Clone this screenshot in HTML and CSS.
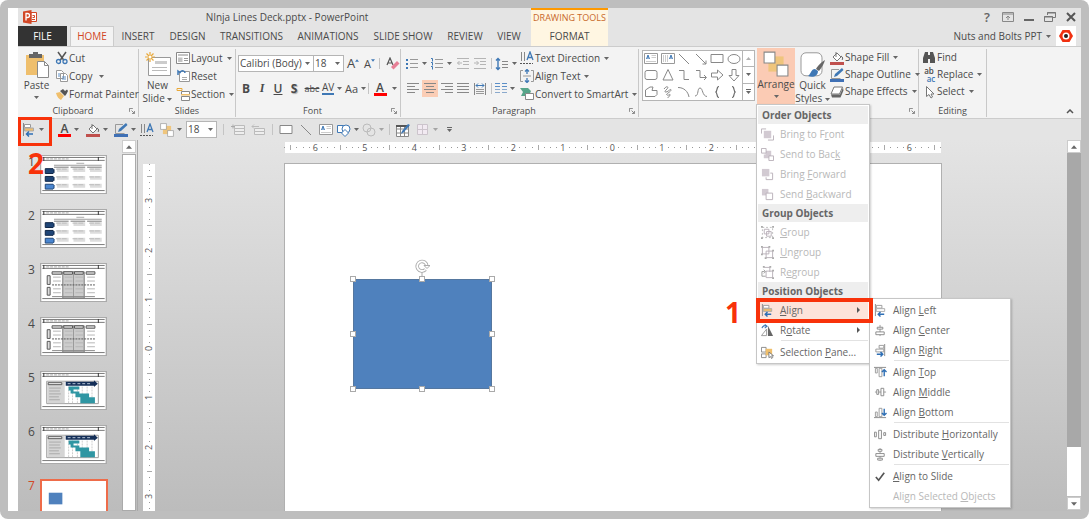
FILE: index.html
```html
<!DOCTYPE html>
<html lang="en">
<head>
<meta charset="utf-8">
<title>NInja Lines Deck.pptx - PowerPoint</title>
<link rel="stylesheet" href="styles.css">
</head>
<body>
<svg class="defs" aria-hidden="true">
  <symbol id="caret" viewBox="0 0 5 3"><path d="M0 0h5L2.5 3z" fill="#666"/></symbol>
  <symbol id="launch" viewBox="0 0 7 7"><path d="M.5 4.500V.5H4.500M3 3l3 3M6.500 3.500v3h-3" fill="none" stroke="#777"/></symbol>
  <symbol id="cut" viewBox="0 0 14 14"><path d="M3 1l6 8.500M11 1L5 9.500" stroke="#555" stroke-width="1.500"/><circle cx="3.500" cy="10.500" r="2" fill="none" stroke="#3f78b5" stroke-width="1.300"/><circle cx="10" cy="10.500" r="2" fill="none" stroke="#3f78b5" stroke-width="1.300"/></symbol>
  <symbol id="copy" viewBox="0 0 14 14"><path d="M1.500 1.500h5l2 2v6h-7z M5.500 4.500h5l2 2v6h-7z" fill="#fff" stroke="#999"/><path d="M3 5h2M3 7h2M7 8h4M7 10h4" stroke="#5c8fc7"/></symbol>
  <symbol id="brush" viewBox="0 0 14 14"><path d="M1 6l4-1 4 4-3 4c-2-1-4-3-5-7z" fill="#f0bf6c"/><path d="M5 4l5 5 1.500-2L13 4l-1-1.500-2 1.500L8 2z" fill="#555"/></symbol>
  <symbol id="paste" viewBox="0 0 24 26"><path d="M1 3h18v20H1z" fill="#efbf6d"/><path d="M4 2h4V0h5v2h4v4H4z" fill="#666"/><path d="M12.500 9.500h7l4 4v12h-11z" fill="#fff" stroke="#8a8a8a"/><path d="M19.500 9.500v4h4" fill="none" stroke="#8a8a8a"/></symbol>
  <symbol id="newslide" viewBox="0 0 26 26"><path d="M3.500 5.500h22v18h-22z" fill="#fff" stroke="#999"/><path d="M10 9h12v3H10z" fill="#ccc"/><path d="M7 15.500h15M7 18.500h15" stroke="#bbb"/><path d="M5 0v10M0 5h10M1.500 1.500l7 7M8.500 1.500l-7 7" stroke="#e9a93a" stroke-width="1.200"/><circle cx="5" cy="5" r="1.500" fill="#fff"/></symbol>
  <symbol id="layout" viewBox="0 0 14 14"><path d="M.5 1.500h13v11H.5z" fill="#fff" stroke="#888"/><path d="M2 3h10v2H2z M2 6.500h4.500V11H2z" fill="#c4c4c4"/><path d="M8 7.500h4M8 9.500h4" stroke="#999"/></symbol>
  <symbol id="reset" viewBox="0 0 14 14"><path d="M3.500 2.500h10v10h-10z" fill="#fff" stroke="#999"/><path d="M6 8.500h5M6 10.500h5" stroke="#aaa"/><path d="M2 6V2l2 1.500C6 .5 9 2 9 4" fill="none" stroke="#3f78b5" stroke-width="1.500"/></symbol>
  <symbol id="section" viewBox="0 0 14 14"><path d="M1 1.500h5v2H1z" fill="none" stroke="#e9a93a"/><path d="M5.500 4.500h8v3h-8z M5.500 9.500h8v4h-8z" fill="#fff" stroke="#888"/><path d="M5 7h9v1.500H5z" fill="#efbf6d"/></symbol>
  <symbol id="grow" viewBox="0 0 5 3"><path d="M0 3h5L2.500 0z" fill="#3f78b5"/></symbol>
  <symbol id="shrink" viewBox="0 0 5 3"><path d="M0 0h5L2.500 3z" fill="#3f78b5"/></symbol>
  <symbol id="erase" viewBox="0 0 14 14"><path d="M1 8L4 1l3 7M2 6h4" fill="none" stroke="#555" stroke-width="1.200"/><path d="M5 10l6-6 2.500 2.500-6 6z" fill="#e77f96"/></symbol>
  <symbol id="bullets" viewBox="0 0 14 14"><path d="M1 2h2v2H1zM1 6h2v2H1zM1 10h2v2H1z" fill="#3f78b5"/><path d="M5 2.500h8M5 6.500h8M5 10.500h8" stroke="#999"/></symbol>
  <symbol id="numbers" viewBox="0 0 14 14"><path d="M1 1.500h1.500v3M1 5.500h1.500v3M1 9.500h1.500v3" stroke="#3f78b5" fill="none"/><path d="M5 2.500h8M5 6.500h8M5 10.500h8" stroke="#999"/></symbol>
  <symbol id="outdent" viewBox="0 0 14 14"><path d="M1 1.500h12M7 4.500h6M7 7.500h6M1 11.500h12M6 6H1.500M3.500 4l-2 2 2 2" fill="none" stroke="#b5b5b5"/></symbol>
  <symbol id="indent" viewBox="0 0 14 14"><path d="M1 1.500h12M7 4.500h6M7 7.500h6M1 11.500h12M1 6h4.500M3.500 4l2 2-2 2" fill="none" stroke="#b5b5b5"/></symbol>
  <symbol id="spacing" viewBox="0 0 14 14"><path d="M3 1.500v11M1 3.500l2-2 2 2M1 10.500l2 2 2-2" fill="none" stroke="#3f78b5" stroke-width="1.400"/><path d="M7 4.500h6M7 7.500h6M7 10.500h6" stroke="#888"/></symbol>
  <symbol id="al" viewBox="0 0 12 12"><path d="M0 .5h12M0 3.500h8M0 6.500h12M0 9.500h8" stroke="#888"/></symbol>
  <symbol id="ac" viewBox="0 0 12 12"><path d="M0 .5h12M2 3.500h8M0 6.500h12M2 9.500h8" stroke="#888"/></symbol>
  <symbol id="ar" viewBox="0 0 12 12"><path d="M0 .5h12M4 3.500h8M0 6.500h12M4 9.500h8" stroke="#888"/></symbol>
  <symbol id="aj" viewBox="0 0 12 12"><path d="M0 .5h12M0 3.500h12M0 6.500h12M0 9.500h12" stroke="#888"/></symbol>
  <symbol id="dist" viewBox="0 0 12 12"><path d="M.5 0v12M11.500 0v12" stroke="#888"/><path d="M2 2.500h8M4 .5l-2 2 2 2M8 .5l2 2-2 2" fill="none" stroke="#3f78b5"/><path d="M2 6.500h8M2 8.500h8M2 10.500h8" stroke="#999"/></symbol>
  <symbol id="cols" viewBox="0 0 12 12"><path d="M0 .5h5M7 .5h5M0 3.500h5M7 3.500h5" stroke="#5c8fc7"/><path d="M0 6.500h5M7 6.500h5M0 9.500h5M7 9.500h5" stroke="#8aa9cc"/></symbol>
  <symbol id="tdir" viewBox="0 0 14 14"><path d="M1.500 1v9M4.500 1v9" stroke="#888"/><path d="M7 9l3-8 3 8M8 6.500h4" fill="none" stroke="#3f78b5" stroke-width="1.300"/><path d="M0 12.500h13" stroke="#555" stroke-dasharray="2 1"/></symbol>
  <symbol id="atext" viewBox="0 0 14 14"><path d="M3 1.500H.5v11H3M11 1.500h2.500v11H11M3 7h8" fill="none" stroke="#999"/><path d="M7 .5V5M5 2.500L7 .5l2 2M7 13.500V9M5 11.500l2 2 2-2" fill="none" stroke="#3f78b5" stroke-width="1.300"/></symbol>
  <symbol id="smart" viewBox="0 0 14 14"><path d="M0 1h8l3 3-2 5H1l2-4z" fill="#57a58a"/><path d="M5.500 6.500h8v6h-8z" fill="#fff" stroke="#888"/></symbol>
  <symbol id="tbox" viewBox="0 0 14 14"><path d="M.5 1.500h13v10H.5z" fill="#fff" stroke="#999"/><path d="M2.500 7l1.500-4 1.500 4M3 6h2" fill="none" stroke="#3f78b5"/><path d="M7.500 3.500H12M7.500 5.500H12M2 9.500h10" stroke="#ccc"/></symbol>
  <symbol id="vbox" viewBox="0 0 14 14"><path d="M.5 1.500h13v10H.5z" fill="#fff" stroke="#999"/><path d="M8.500 7l1.500-4 1.500 4M9 6h2" fill="none" stroke="#3f78b5"/><path d="M2.500 3v7M4.500 3v7M6.500 3v7" stroke="#ccc"/></symbol>
  <symbol id="line" viewBox="0 0 14 14"><path d="M2 2l10 10" stroke="#888"/></symbol>
  <symbol id="arrow" viewBox="0 0 14 14"><path d="M2 2l10 10M12 8.500V12H8.500" fill="none" stroke="#888"/></symbol>
  <symbol id="rect" viewBox="0 0 14 14"><path d="M1 2.500h12v8H1z" fill="#fff" stroke="#888"/></symbol>
  <symbol id="oval" viewBox="0 0 14 14"><ellipse cx="7" cy="7" rx="6" ry="4.500" fill="none" stroke="#888"/></symbol>
  <symbol id="rrect" viewBox="0 0 14 14"><rect x="1" y="2.500" width="12" height="9" rx="2" fill="none" stroke="#888"/></symbol>
  <symbol id="tri" viewBox="0 0 14 14"><path d="M7 1.500l5 10.500H2z" fill="none" stroke="#888"/></symbol>
  <symbol id="elbow" viewBox="0 0 14 14"><path d="M2 2.500h5v9h5" fill="none" stroke="#888"/></symbol>
  <symbol id="elbowa" viewBox="0 0 14 14"><path d="M2 2.500h4v7h6M10 7l2.500 2.500L10 12" fill="none" stroke="#888"/></symbol>
  <symbol id="arrr" viewBox="0 0 14 14"><path d="M1.500 5h6V2L13 7l-5.500 5V9h-6z" fill="none" stroke="#888"/></symbol>
  <symbol id="arrd" viewBox="0 0 14 14"><path d="M5 1.500v6H2L7 13l5-5.500H9v-6z" fill="none" stroke="#888"/></symbol>
  <symbol id="free" viewBox="0 0 14 14"><path d="M1.500 11.500V5L6 2h3L8 5.500h5v4L11 11.500z" fill="none" stroke="#888"/></symbol>
  <symbol id="scrib" viewBox="0 0 14 14"><path d="M3 4c3-4 5-2 3 0S3 7 5 7s5-4 5-2-6 4-4 5 3-2 3 0-3 2-2 3" fill="none" stroke="#888"/></symbol>
  <symbol id="arc" viewBox="0 0 14 14"><path d="M1 2.500c6 0 10 4 11 9.500" fill="none" stroke="#888"/></symbol>
  <symbol id="curve" viewBox="0 0 14 14"><path d="M1 11c4 0 2-8 5-8s2 8 7 8.500" fill="none" stroke="#888"/></symbol>
  <symbol id="brl" viewBox="0 0 14 14"><path d="M9 1.500c-3 0-1 5-3.500 5.500 2.500.5.5 5.500 3.500 5.500" fill="none" stroke="#666" stroke-width="1.200"/></symbol>
  <symbol id="brr" viewBox="0 0 14 14"><path d="M5 1.500c3 0 1 5 3.500 5.500-2.500.5-.5 5.500-3.500 5.500" fill="none" stroke="#666" stroke-width="1.200"/></symbol>
  <symbol id="arrange" viewBox="0 0 24 24"><path d="M5 5h14v14H5z" fill="#efc57c"/><path d="M1 1h10v10H1z M13 13h10v10H13z" fill="#fff" stroke="#888"/></symbol>
  <symbol id="quick" viewBox="0 0 26 26"><rect x="1" y=".8" width="21" height="23" rx="5" fill="#fff" stroke="#999"/><path d="M25 8c-4 2-8 7-9 9l3 2c3-4 5-7 6-11z" fill="#666"/><path d="M15 17c-4 0-4 5-7 7 5 2 10 0 10-5z" fill="#3f78b5"/></symbol>
  <symbol id="fill" viewBox="0 0 14 14"><path d="M3 6l4-4 4 4-4 4zM6 1v5" fill="#fff" stroke="#777"/><path d="M11 5c2 1 2 3 1 4" fill="none" stroke="#666"/><path d="M0 11h14v3H0z" fill="#c0504d"/></symbol>
  <symbol id="outline" viewBox="0 0 14 14"><path d="M9 1.500H1.500v9h9" fill="none" stroke="#999"/><path d="M4 9l1-3 7-6 1.500 2L7 8z" fill="#3f78b5"/><path d="M0 11h14v3H0z" fill="#3f70b5"/></symbol>
  <symbol id="effects" viewBox="0 0 14 14"><path d="M4 2h8.500l-3 7H1z" fill="#fff" stroke="#777"/><path d="M1 9.500h9l3-7 .5 3-3 7H2z" fill="#666"/></symbol>
  <symbol id="find" viewBox="0 0 14 14"><path d="M3 1h3v3h2V1h3l2 6v5H8V8H6v4H1V7z" fill="#555"/></symbol>
  <symbol id="cursor" viewBox="0 0 14 14"><path d="M4.500 1.500v10l2.500-2 2 3.500 1.500-1L9 9h3z" fill="#fff" stroke="#777"/></symbol>
  <symbol id="alignl" viewBox="0 0 14 14"><path d="M1.500 0v13" stroke="#888"/><path d="M2.500 1.500h6v3h-6z" fill="#fff" stroke="#999"/><path d="M2.500 5h9v3h-9z" class="bar" stroke="#aaa"/><path d="M11 11H4.500M7 8.500L4.500 11 7 13.500" fill="none" stroke="#2e6fb5" stroke-width="1.500"/></symbol>
  <symbol id="alignc" viewBox="0 0 14 14"><path d="M6.500 1v12" stroke="#999"/><path d="M3.500 3.500h6v2h-6zM2 8.500h9v3H2z" fill="#fff" stroke="#888"/></symbol>
  <symbol id="alignr" viewBox="0 0 14 14"><path d="M11.500 0v13" stroke="#888"/><path d="M5.500 1.500h5v3h-5zM2 5.500h8.500v3H2z" fill="#fff" stroke="#999"/><path d="M3 11h6.500M7 8.500L9.500 11 7 13.500" fill="none" stroke="#2e6fb5" stroke-width="1.500"/></symbol>
  <symbol id="alignt" viewBox="0 0 14 14"><path d="M0 1.500h13" stroke="#888"/><path d="M1.500 2.500h2v5h-2zM5.500 2.500h3v9h-3z" fill="#fff" stroke="#999"/><path d="M11 11V4M8.500 6.500L11 4l2.500 2.500" fill="none" stroke="#2e6fb5" stroke-width="1.500"/></symbol>
  <symbol id="alignm" viewBox="0 0 14 14"><path d="M1 6.500h12" stroke="#999"/><path d="M3 4h2v5H3zM7.500 2.500h3v8h-3z" fill="#fff" stroke="#888"/></symbol>
  <symbol id="alignb" viewBox="0 0 14 14"><path d="M0 12.500h13" stroke="#888"/><path d="M1.500 6.500h2v5h-2zM5.500 2.500h3v9h-3z" fill="#fff" stroke="#999"/><path d="M11 3v7M8.500 7.500L11 10l2.500-2.500" fill="none" stroke="#2e6fb5" stroke-width="1.500"/></symbol>
  <symbol id="disth" viewBox="0 0 14 14"><path d="M.5 4.500h2v5h-2zM5 2.500h3v9H5zM10.500 5h2v3h-2z" fill="#fff" stroke="#888"/></symbol>
  <symbol id="distv" viewBox="0 0 14 14"><path d="M6.500 0v14" stroke="#999"/><path d="M4.500 1.500h4v2h-4zM2 6h9v3H2zM4 11h5v2H4z" fill="#fff" stroke="#888"/></symbol>
  <symbol id="check" viewBox="0 0 14 14"><path d="M2 7.500L5 11l6-8" fill="none" stroke="#555" stroke-width="1.800"/></symbol>
  <symbol id="tofront" viewBox="0 0 14 14"><path d="M5.500 1H.5v5M13.500 8v5h-6" fill="none" stroke="#b9b0b9"/><path d="M3 3h8v8H3z" fill="#d2cad2"/></symbol>
  <symbol id="toback" viewBox="0 0 14 14"><path d="M5 3h6v8H3V7h2z" fill="#d2cad2"/><path d="M.5.5h5v5h-5zM8.500 8.500h5v5h-5z" fill="#fff" stroke="#b9b0b9"/></symbol>
  <symbol id="fwd" viewBox="0 0 14 14"><path d="M1 1h8v8H1z" fill="#d2cad2"/><path d="M10 5.500h2.500v7h-7V10" fill="none" stroke="#b9b0b9"/></symbol>
  <symbol id="bwd" viewBox="0 0 14 14"><path d="M1 1h7v7H1z" fill="#d2cad2"/><path d="M5.500 5.500h7v7h-7z" fill="#fff" stroke="#b9b0b9"/></symbol>
  <symbol id="group" viewBox="0 0 14 14"><path d="M1.500 1.500h11v11h-11z" fill="none" stroke="#bbb" stroke-dasharray="2 2"/><path d="M3.500 3.500h5v5h-5zM6 6h5v5H6z" fill="none" stroke="#b9b0b9"/><path d="M0 0h2v2H0zM12 0h2v2h-2zM0 12h2v2H0zM12 12h2v2h-2z" fill="#aaa"/></symbol>
  <symbol id="ungroup" viewBox="0 0 14 14"><path d="M1.500 1.500h7v7h-7zM5.500 5.500h7v7h-7z" fill="none" stroke="#b9b0b9"/><path d="M0 0h2v2H0zM8 0h2v2H8zM0 8h2v2H0zM12 4h2v2h-2zM4 12h2v2H4zM12 12h2v2h-2z" fill="#aaa"/></symbol>
  <symbol id="regroup" viewBox="0 0 14 14"><path d="M3.500 1.500h6v5M5.500 5.500h7v7h-7z" fill="none" stroke="#b9b0b9"/><path d="M5 11H1V6h3M3 4l2 2-2 2" fill="none" stroke="#999"/><path d="M2 0h2v2H2zM9 0h2v2H9zM12 4h2v2h-2zM12 12h2v2h-2z" fill="#aaa"/></symbol>
  <symbol id="rotate" viewBox="0 0 14 14"><path d="M6 5.500v7H.5z" fill="#fff" stroke="#999"/><path d="M7.500 2l5.500 11H7.500z" fill="#666"/><path d="M1 4.500c1-3 3-3 5-2M4 .5l2.500 2-2.500 2" fill="none" stroke="#3f78b5" stroke-width="1.200"/></symbol>
  <symbol id="selpane" viewBox="0 0 14 14"><path d="M.5 1.500h5v5h-5zM.5 8.500h5v4h-5z" fill="#fff" stroke="#888"/><path d="M5 3h7v7H5z" fill="#efbf6d"/><path d="M8.500 6.500v6l2-1 1 2 1-1-1-2h2z" fill="#fff" stroke="#777"/></symbol>
  <symbol id="rows" viewBox="0 0 14 14"><path d="M3.500 2.500h10v3h-10zM3.500 5.500h10v3h-10zM3.500 8.500h10v3h-10z" fill="#eee" stroke="#bbb"/><path d="M0 3.500h4M2 1.500v4" stroke="#aaa"/></symbol>
  <symbol id="rows2" viewBox="0 0 14 14"><path d="M3.500 5.500h10v3h-10zM3.500 8.500h10v3h-10zM1 3.500h7M3 1.500l-2 2 2 2" fill="#eee" stroke="#bbb"/></symbol>
  <symbol id="shapes" viewBox="0 0 14 14"><path d="M.5 2.500h7v7h-7z" fill="#fff" stroke="#3f78b5"/><circle cx="9" cy="6" r="4" fill="#fff" stroke="#3f78b5"/><path d="M8 6.500l3.500 3.500L8 13.500 4.500 10z" fill="#fff" stroke="#3f78b5"/></symbol>
  <symbol id="merge" viewBox="0 0 14 14"><circle cx="5" cy="5" r="4" fill="none" stroke="#bbb"/><circle cx="9" cy="9" r="4" fill="none" stroke="#bbb"/></symbol>
  <symbol id="tableedit" viewBox="0 0 14 14"><path d="M.5 2.500h12v11H.5zM.5 6h12M.5 10h12M4.500 3v10M8.500 3v10" fill="#fff" stroke="#888"/><path d="M0 2h13v2H0z" fill="#555"/><path d="M5 11l1-3 6-7 2 1-6 7z" fill="#3f78b5"/></symbol>
  <symbol id="border" viewBox="0 0 14 14"><path d="M1.500 1.500h10v10h-10zM6.500 1.500v10M1.500 6.500h10" fill="#f2eaf2" stroke="#ccc4cc"/></symbol>
  <symbol id="up" viewBox="0 0 7 4"><path d="M0 4h7L3.500 0z" fill="#666"/></symbol>
  <symbol id="down" viewBox="0 0 7 4"><path d="M0 0h7L3.500 4z" fill="#666"/></symbol>

  <symbol id="slide-base" viewBox="0 0 66 38"><path d="M0 0h66v38H0z" fill="#fff"/><path d="M1 1.500h64M1 4.500h64M1 35.500h64" stroke="#777"/><path d="M2.500 1v4M58.500 1v4" stroke="#333"/><path d="M5 3h24" stroke="#aaa" stroke-dasharray="3 1"/></symbol>
  <symbol id="slide-table" viewBox="0 0 66 38"><use href="#slide-base"/><path d="M13 9.500h49" stroke="#999"/><path d="M36 7.500h8" stroke="#aaa"/><path d="M13 11.500h15M30 11.500h15M47 11.500h15" stroke="#777"/><path d="M16 14.500h12M33 14.500h12M50 14.500h12M16 22.500h12M33 22.500h12M50 22.500h12M16 30.500h12M33 30.500h12M50 30.500h12" stroke="#ddd" stroke-width="4"/><path d="M15 13.500h12M32 13.500h12M49 13.500h12M15 21.500h12M32 21.500h12M49 21.500h12M15 29.500h12M32 29.500h12M49 29.500h12" stroke="#bbb" stroke-dasharray="5 1"/><path d="M4 13h8l1 1v3l-1 1H4z M4 21h8l1 1v3l-1 1H4z" fill="#1f4576" stroke="#0c2344"/><path d="M4 29h8l1 1v3l-1 1H4z" fill="#4a86d0" stroke="#1f4576"/></symbol>
  <symbol id="slide-matrix" viewBox="0 0 66 38"><use href="#slide-base"/><path d="M22 8h22v27H22z" fill="#ccc" stroke="#777"/><path d="M33 8v27" stroke="#999"/><path d="M11 8h10v2.500H11zM23 8h9v2.500h-9zM34 8h9v2.500h-9zM46 8h9v2.500h-9zM6 12h3v9H6zM6 24h3v8H6z" fill="#ddd" stroke="#555"/><path d="M12 13.500h8M24 13.500h8M35 13.500h8M47 13.500h8M12 17.500h8M24 17.500h8M35 17.500h8M47 17.500h8M12 25.500h8M24 25.500h8M35 25.500h8M47 25.500h8M12 29.500h8M24 29.500h8M35 29.500h8M47 29.500h8" stroke="#b5b5b5"/><path d="M11 21.500h44" stroke="#555" stroke-dasharray="2 1"/><path d="M11 33.500h44" stroke="#888"/></symbol>
  <symbol id="slide-gantt" viewBox="0 0 66 38"><use href="#slide-base"/><path d="M5.500 9.500h53v23h-53z" fill="#fff" stroke="#999"/><path d="M6 10h18v22H6z" fill="#d5d5d5"/><path d="M7 11h14v2H7z" fill="#fff" stroke="#555"/><path d="M8 16.500h12M8 19.500h11M8 22.500h12M8 25.500h10M8 28.500h11" stroke="#aaa"/><path d="M28 15v17M32 15v17M37 15v17M42 15v17M47 15v17M52 15v17" stroke="#ccc" stroke-dasharray="2 1"/><path d="M25 10h29V8.500l4 3.500-4 3.500V14H25z" fill="#142f58"/><path d="M27 12h25" stroke="#b8c4d8" stroke-dasharray="3 2"/><path d="M28 15h11v3h-6v2h6v2h10v4h6v6H40v-6h-5v-4h-5v-3h-2z" fill="#2f96a3"/></symbol>
</svg>

<div class="frame">
<div class="app">
  <header class="header">
    <svg class="logo" viewBox="0 0 14 14" aria-label="PowerPoint"><path d="M8 2.500h5.500v9H8z" fill="#fff" stroke="#d24726"/><path d="M9.500 5.500h2v2h-2M9 9.500h3" fill="none" stroke="#d24726"/><path d="M0 1.500L8.500 0v14L0 12.500z" fill="#d24726"/><path d="M3 10.500v-7h1.500a2 2 0 0 1 0 4H3" fill="none" stroke="#fff" stroke-width="1.300"/></svg>
    <h1 class="title">NInja Lines Deck.pptx - PowerPoint</h1>
    <div class="context">DRAWING TOOLS</div>
    <div class="window-controls">
      <button class="help" aria-label="Help">?</button>
      <button aria-label="Ribbon display options"><svg viewBox="0 0 12 10"><path d="M.5.5h11v9H.5zM1 2h10M6 8V4M4 6l2-2 2 2" fill="none" stroke="#888"/></svg></button>
      <button aria-label="Minimize"><svg viewBox="0 0 12 10"><path d="M1 8h10" stroke="#666" stroke-width="2"/></svg></button>
      <button aria-label="Restore"><svg viewBox="0 0 12 10"><path d="M3.500 3V.5h8v5H9M3 1h9M.5 4.500h8v5h-8zM0 5h9" fill="none" stroke="#777"/></svg></button>
      <button aria-label="Close"><svg viewBox="0 0 12 10"><path d="M2 1l8 8M10 1L2 9" stroke="#555" stroke-width="2"/></svg></button>
    </div>
    <button class="tab file">FILE</button>
    <button class="tab active">HOME</button>
    <button class="tab">INSERT</button>
    <button class="tab">DESIGN</button>
    <button class="tab">TRANSITIONS</button>
    <button class="tab">ANIMATIONS</button>
    <button class="tab">SLIDE SHOW</button>
    <button class="tab">REVIEW</button>
    <button class="tab view">VIEW</button>
    <button class="tab format">FORMAT</button>
    <div class="account">
      <button class="user">Nuts and Bolts PPT <svg class="caret"><use href="#caret"/></svg></button>
      <svg class="avatar" viewBox="0 0 20 20"><path d="M0 0h20v20H0z" fill="#fff"/><path d="M6.500 4h7l3.500 6-3.500 6h-7L3 10z" fill="#f03010"/><circle cx="10" cy="10" r="3.500" fill="#fff"/><circle cx="10" cy="10" r="2" fill="#222"/></svg>
    </div>
  </header>

  <div class="ribbon">
    <section class="group clipboard">
      <div class="body">
        <button class="big"><svg class="i-big"><use href="#paste"/></svg><span>Paste</span><svg class="caret low"><use href="#caret"/></svg></button>
        <div class="stack">
          <button><svg><use href="#cut"/></svg>Cut</button>
          <button><svg><use href="#copy"/></svg>Copy <svg class="caret far"><use href="#caret"/></svg></button>
          <button><svg><use href="#brush"/></svg>Format Painter</button>
        </div>
      </div>
      <h2>Clipboard</h2><button class="launcher" aria-label="Clipboard options"><svg><use href="#launch"/></svg></button>
    </section>
    <section class="group slides">
      <div class="body">
        <button class="big"><svg class="i-big"><use href="#newslide"/></svg><span>New<br>Slide <svg class="caret"><use href="#caret"/></svg></span></button>
        <div class="stack">
          <button><svg><use href="#layout"/></svg>Layout <svg class="caret"><use href="#caret"/></svg></button>
          <button><svg><use href="#reset"/></svg>Reset</button>
          <button><svg><use href="#section"/></svg>Section <svg class="caret"><use href="#caret"/></svg></button>
        </div>
      </div>
      <h2 class="plain">Slides</h2>
    </section>
    <section class="group font">
      <div class="body rows">
        <div class="row">
          <span class="combo face"><select aria-label="Font"><option>Calibri (Body)</option></select><svg class="caret"><use href="#caret"/></svg></span><span class="combo size"><select aria-label="Font size"><option>18</option></select><svg class="caret"><use href="#caret"/></svg></span>
          <button class="glyph" aria-label="Increase font size">A<svg class="sup"><use href="#grow"/></svg></button>
          <button class="glyph small" aria-label="Decrease font size">A<svg class="sup"><use href="#shrink"/></svg></button>
          <i class="div"></i>
          <button aria-label="Clear formatting"><svg><use href="#erase"/></svg></button>
        </div>
        <div class="row styles">
          <button class="b">B</button><button class="it">I</button><button class="u">U</button><button class="b shadow">S</button><button class="strike">abc</button>
          <button class="av"><span>AV</span><svg class="caret"><use href="#caret"/></svg></button>
          <button class="aa">Aa<svg class="caret"><use href="#caret"/></svg></button>
          <i class="div"></i>
          <button class="color"><span>A</span><svg class="caret"><use href="#caret"/></svg></button>
        </div>
      </div>
      <h2>Font</h2><button class="launcher" aria-label="Font options"><svg><use href="#launch"/></svg></button>
    </section>
    <section class="group paragraph">
      <div class="body">
        <div class="rows para">
          <div class="row">
            <button class="drop" aria-label="Bullets"><svg><use href="#bullets"/></svg><svg class="caret"><use href="#caret"/></svg></button>
            <button class="drop" aria-label="Numbering"><svg><use href="#numbers"/></svg><svg class="caret"><use href="#caret"/></svg></button>
            <button class="sq" aria-label="Decrease indent"><svg><use href="#outdent"/></svg></button>
            <button class="sq" aria-label="Increase indent"><svg><use href="#indent"/></svg></button>
            <i class="div"></i>
            <button class="drop" aria-label="Line spacing"><svg><use href="#spacing"/></svg><svg class="caret"><use href="#caret"/></svg></button>
          </div>
          <div class="row aligns">
            <button class="sq" aria-label="Align left"><svg><use href="#al"/></svg></button>
            <button class="sq on" aria-label="Center"><svg><use href="#ac"/></svg></button>
            <button class="sq" aria-label="Align right"><svg><use href="#ar"/></svg></button>
            <button class="sq" aria-label="Justify"><svg><use href="#aj"/></svg></button>
            <button class="sq" aria-label="Distribute"><svg><use href="#dist"/></svg></button>
            <i class="div"></i>
            <button class="drop" aria-label="Columns"><svg><use href="#cols"/></svg><svg class="caret"><use href="#caret"/></svg></button>
          </div>
        </div>
        <div class="stack">
          <button><svg><use href="#tdir"/></svg>Text Direction <svg class="caret"><use href="#caret"/></svg></button>
          <button><svg><use href="#atext"/></svg>Align Text <svg class="caret"><use href="#caret"/></svg></button>
          <button><svg><use href="#smart"/></svg>Convert to SmartArt <svg class="caret"><use href="#caret"/></svg></button>
        </div>
      </div>
      <h2>Paragraph</h2><button class="launcher" aria-label="Paragraph options"><svg><use href="#launch"/></svg></button>
    </section>
    <section class="group drawing">
      <div class="body">
        <div class="gallery">
          <div class="shapes">
            <svg><use href="#tbox"/></svg><svg><use href="#vbox"/></svg><svg><use href="#line"/></svg><svg><use href="#arrow"/></svg><svg><use href="#rect"/></svg><svg><use href="#oval"/></svg>
            <svg><use href="#rrect"/></svg><svg><use href="#tri"/></svg><svg><use href="#elbow"/></svg><svg><use href="#elbowa"/></svg><svg><use href="#arrr"/></svg><svg><use href="#arrd"/></svg>
            <svg><use href="#free"/></svg><svg><use href="#scrib"/></svg><svg><use href="#arc"/></svg><svg><use href="#curve"/></svg><svg><use href="#brl"/></svg><svg><use href="#brr"/></svg>
          </div>
          <div class="spin">
            <button class="prev" aria-label="Previous shapes"><svg class="caret"><use href="#up"/></svg></button>
            <button aria-label="Next shapes"><svg class="caret"><use href="#caret"/></svg></button>
            <button class="more" aria-label="More shapes"><svg class="caret"><use href="#caret"/></svg></button>
          </div>
        </div>
        <div class="arrange">
          <button class="big open"><svg class="i-big"><use href="#arrange"/></svg><span>Arrange</span><svg class="caret low"><use href="#caret"/></svg></button>
          <div class="menu main-menu" role="menu">
            <h3>Order Objects</h3>
            <button disabled><svg><use href="#tofront"/></svg><span>Bring to F<u>r</u>ont</span></button>
            <button disabled><svg><use href="#toback"/></svg><span>Send to Bac<u>k</u></span></button>
            <button disabled><svg><use href="#fwd"/></svg><span>Bring <u>F</u>orward</span></button>
            <button disabled><svg><use href="#bwd"/></svg><span>Send <u>B</u>ackward</span></button>
            <h3>Group Objects</h3>
            <button disabled><svg><use href="#group"/></svg><span><u>G</u>roup</span></button>
            <button disabled><svg><use href="#ungroup"/></svg><span><u>U</u>ngroup</span></button>
            <button disabled><svg><use href="#regroup"/></svg><span>R<u>e</u>group</span></button>
            <h3>Position Objects</h3>
            <div class="align-item">
              <button class="hot"><svg class="gold"><use href="#alignl"/></svg><span><u>A</u>lign</span><i class="sub"></i></button>
              <div class="menu sub-menu" role="menu">
                <button><svg><use href="#alignl"/></svg><span>Align <u>L</u>eft</span></button>
                <button><svg><use href="#alignc"/></svg><span>Align <u>C</u>enter</span></button>
                <button><svg><use href="#alignr"/></svg><span>Align <u>R</u>ight</span></button>
                <hr>
                <button><svg><use href="#alignt"/></svg><span>Align <u>T</u>op</span></button>
                <button><svg><use href="#alignm"/></svg><span>Align <u>M</u>iddle</span></button>
                <button><svg><use href="#alignb"/></svg><span>Align <u>B</u>ottom</span></button>
                <hr>
                <button><svg><use href="#disth"/></svg><span>Distribute <u>H</u>orizontally</span></button>
                <button><svg><use href="#distv"/></svg><span>Distribute <u>V</u>ertically</span></button>
                <hr>
                <button><svg><use href="#check"/></svg><span><u>A</u>lign to Slide</span></button>
                <button disabled><svg></svg><span>Align Selected <u>O</u>bjects</span></button>
              </div>
              <div class="callout callout-1"><b>1</b></div>
            </div>
            <button><svg><use href="#rotate"/></svg><span>R<u>o</u>tate</span><i class="sub"></i></button>
            <hr>
            <button><svg><use href="#selpane"/></svg><span>Selection <u>P</u>ane...</span></button>
          </div>
        </div>
        <button class="big quick"><svg class="i-big"><use href="#quick"/></svg><span>Quick<br>Styles <svg class="caret"><use href="#caret"/></svg></span></button>
        <div class="stack tight">
          <button><svg><use href="#fill"/></svg>Shape Fill <svg class="caret"><use href="#caret"/></svg></button>
          <button><svg><use href="#outline"/></svg>Shape Outline <svg class="caret"><use href="#caret"/></svg></button>
          <button><svg><use href="#effects"/></svg>Shape Effects <svg class="caret"><use href="#caret"/></svg></button>
        </div>
      </div>
      <h2>&nbsp;</h2><button class="launcher" aria-label="Drawing options"><svg><use href="#launch"/></svg></button>
    </section>
    <section class="group editing">
      <div class="body">
        <div class="stack tight">
          <button><svg><use href="#find"/></svg>Find</button>
          <button><span class="abac">ab<br><em>ac</em></span>Replace <svg class="caret"><use href="#caret"/></svg></button>
          <button><svg><use href="#cursor"/></svg>Select <svg class="caret"><use href="#caret"/></svg></button>
        </div>
      </div>
      <h2 class="plain">Editing</h2>
    </section>
    <button class="collapse" aria-label="Collapse the ribbon"><svg viewBox="0 0 8 5"><path d="M1 4l3-3 3 3" fill="none" stroke="#555" stroke-width="1.500"/></svg></button>
  </div>

  <div class="qat">
    <div class="qat-align">
      <button aria-label="Align"><svg class="gold"><use href="#alignl"/></svg><svg class="caret"><use href="#caret"/></svg></button>
      <div class="callout callout-2"><b>2</b></div>
    </div>
    <button class="color"><span>A</span><svg class="caret"><use href="#caret"/></svg></button>
    <button aria-label="Shape fill"><svg><use href="#fill"/></svg><svg class="caret"><use href="#caret"/></svg></button>
    <button aria-label="Shape outline"><svg><use href="#outline"/></svg><svg class="caret"><use href="#caret"/></svg></button>
    <button aria-label="Text direction"><svg><use href="#tdir"/></svg></button>
    <button aria-label="Arrange"><svg><use href="#arrange"/></svg><svg class="caret"><use href="#caret"/></svg></button>
    <span class="combo size"><select aria-label="Size"><option>18</option></select><svg class="caret"><use href="#caret"/></svg></span>
    <i class="div"></i>
    <button aria-label="Insert row"><svg><use href="#rows"/></svg></button>
    <button aria-label="Delete row"><svg><use href="#rows2"/></svg></button>
    <i class="div"></i>
    <button aria-label="Rectangle"><svg><use href="#rect"/></svg></button>
    <button aria-label="Line"><svg><use href="#line"/></svg></button>
    <button aria-label="Text box"><svg><use href="#tbox"/></svg></button>
    <button aria-label="Shapes"><svg><use href="#shapes"/></svg><svg class="caret"><use href="#caret"/></svg></button>
    <button class="dim" aria-label="Merge shapes"><svg><use href="#merge"/></svg><svg class="caret"><use href="#caret"/></svg></button>
    <i class="div"></i>
    <button aria-label="Draw table"><svg><use href="#tableedit"/></svg></button>
    <button class="dim" aria-label="Borders"><svg><use href="#border"/></svg><svg class="caret"><use href="#caret"/></svg></button>
    <button class="more" aria-label="Customize"><svg class="caret"><use href="#caret"/></svg></button>
  </div>

  <main class="work">
    <ol class="thumbs">
      <li><span>1</span><svg><use href="#slide-table"/></svg></li>
      <li><span>2</span><svg><use href="#slide-table"/></svg></li>
      <li><span>3</span><svg><use href="#slide-matrix"/></svg></li>
      <li><span>4</span><svg><use href="#slide-matrix"/></svg></li>
      <li><span>5</span><svg><use href="#slide-gantt"/></svg></li>
      <li><span>6</span><svg><use href="#slide-gantt"/></svg></li>
      <li class="current"><span>7</span><svg viewBox="0 0 66 38"><path d="M0 0h66v38H0z" fill="#fff"/><path d="M7 12h14v12H7z" fill="#4f81bd"/></svg></li>
    </ol>
    <div class="scroll left"><button aria-label="Scroll up"><svg><use href="#up"/></svg></button><div class="thumb"></div></div>
    <div class="vside"><div class="ruler vertical"></div></div>
    <div class="canvas">
      <div class="ruler horizontal"></div>
      <div class="slide">
        <div class="shape">
          <svg class="rot" viewBox="0 0 16 18"><path d="M8 13v5" stroke="#aaa"/><path d="M11.500 10.500a4.800 4.800 0 1 1 1.300-3.500" fill="none" stroke="#aaa" stroke-width="3.500"/><path d="M11.500 10.500a4.800 4.800 0 1 1 1.300-3.500" fill="none" stroke="#fff" stroke-width="1.800"/><path d="M10 6.500h6L13 9.500z" fill="#fff" stroke="#aaa"/></svg>
          <i class="nw"></i><i class="n"></i><i class="ne"></i><i class="w"></i><i class="e"></i><i class="sw"></i><i class="s"></i><i class="se"></i>
        </div>
      </div>
    </div>
    <div class="scroll right"><button aria-label="Scroll up"><svg><use href="#up"/></svg></button><div class="thumb dark"></div><div class="track"></div><button aria-label="Scroll down"><svg><use href="#down"/></svg></button></div>
  </main>
</div>
</div>
<script src="rulers.js"></script>
</body>
</html>
```

FILE: rulers.js
```js
// Eight marks per inch: a number on each inch, a bar on each half, a dot otherwise.
function drawRuler(selector, last) {
  var ruler = document.querySelector(selector);
  for (var k = -last; k <= last; k++) {
    var mark = document.createElement('span');
    if (k % 8 === 0) {
      mark.innerHTML = '<b>' + Math.abs(k / 8) + '</b>';
    } else {
      mark.className = k % 4 === 0 ? 'half' : 'dot';
    }
    ruler.appendChild(mark);
  }
}
drawRuler('.ruler.horizontal', 53);
drawRuler('.ruler.vertical', 30);
```

FILE: styles.css
```css
* { box-sizing: border-box; }
body { margin: 0; background: #fff; color: #4a4a4a; font: 10px/13px "Open Sans", "Noto Sans", sans-serif; overflow: hidden; }
button, select { font: inherit; color: inherit; background: none; border: 0; padding: 0; margin: 0; white-space: nowrap; }
h1, h2, h3 { margin: 0; font: inherit; }
svg { display: block; flex: none; width: 14px; height: 14px; }
.defs { position: absolute; width: 0; height: 0; }
svg.caret { width: 5px; height: 3px; }
.frame { height: 100vh; padding: 8px; background: #bebebe; border-radius: 8px; }
.app { display: flex; flex-direction: column; height: 100%; border-left: 10px solid #fff; background: #e4e4e4; }

.header { display: grid; grid-template-columns: 49px 47px 48px 51px 77px 76px 74px 50px 41px 77px 1fr; grid-template-rows: 18px 20px; }
.logo { grid-column: 1; margin: 2px 0 0 5px; }
.title { grid-column: 2 / 10; text-align: center; padding-right: 24px; line-height: 18px; }
.context { grid-column: 10; background: #fff6e2; border-top: 2px solid #f90; color: #c8682a; font-size: 9px; line-height: 15px; text-align: center; white-space: nowrap; }
.window-controls { grid-column: 11; display: flex; justify-content: flex-end; align-items: center; gap: 9px; padding-right: 4px; }
.window-controls svg { width: 12px; height: 10px; }
.help { font-size: 13px; font-weight: 600; width: 12px; color: #666; }
.tab { text-align: center; height: 20px; }
.file { background: #333; color: #fff; }
.active { background: #f3f3f3; border: 1px solid #ccc; border-bottom: 0; color: #d24726; margin-left: 3px; }
.view { padding-right: 3px; }
.format { background: #fff6e2; }
.account { display: flex; justify-content: flex-end; gap: 5px; padding-right: 5px; }
.user { display: flex; align-items: center; gap: 4px; }
.avatar { width: 20px; height: 20px; }

.ribbon { display: flex; height: 73px; background: #f3f3f3; border-top: 1px solid #ccc; border-bottom: 1px solid #ccc; position: relative; z-index: 2; }
.group { display: grid; grid-template-rows: 1fr 12px; border-right: 1px solid #c8c8c8; margin: 2px 0 1px; position: relative; flex: none; }
.group h2 { font-size: 9px; line-height: 12px; text-align: center; padding-right: 11px; }
.group h2.plain { padding-right: 0; }
.launcher { position: absolute; right: 3px; bottom: 3px; }
.launcher svg { width: 6px; height: 6px; }
.clipboard { width: 121px; }
.slides { width: 97px; }
.font { width: 165px; }
.paragraph { width: 238px; }
.drawing { width: 280px; }
.editing { width: 68px; }
.body { display: flex; }
.stack { display: flex; flex-direction: column; height: 55px; }
.stack button { display: flex; align-items: center; gap: 1px; height: 18px; }
.stack .caret { margin-left: 3px; }
.stack .caret.far { margin-left: 7px; }
.stack.tight { height: 51px; }
.stack.tight button { height: 17px; }
.clipboard .stack button { gap: 0; }
.big { display: flex; flex-direction: column; align-items: center; width: 37px; }
.big .caret.low { margin-top: 4px; }
.big span .caret { display: inline-block; vertical-align: middle; }
.i-big { width: 26px; height: 26px; margin: 3px 0 1px; }
.rows { flex-direction: column; }
.row { display: flex; align-items: center; height: 25px; }
.div { width: 1px; height: 11px; background: #c4c4c4; flex: none; justify-self: center; }

.combo { display: inline-flex; position: relative; height: 17px; border: 1px solid #b5b5b5; background: #fff; }
.combo select { appearance: none; width: 100%; padding-left: 1px; }
.combo .caret { position: absolute; right: 3px; top: 6px; }
.combo.face { width: 76px; }
.combo.size { width: 31px; margin-left: -1px; }
.font .body { padding: 2px 0 0 2px; }
.row .glyph { display: flex; width: 17px; font-size: 13px; margin-left: 3px; }
.row .glyph.small { font-size: 11px; margin-left: 0; }
.sup { width: 4px; height: 3px; margin-top: 2px; }
.font .row:first-child .div { margin: 0 6px 0 -2px; }
.styles button { width: 16px; font-size: 12px; text-align: center; }
.b { font-weight: 700; }
.it { font-family: "Liberation Serif", serif; font-style: italic; font-weight: 700; }
.u { text-decoration: underline; font-weight: 600; }
.shadow { text-shadow: 1px 1px 1px #aaa; }
.styles .strike { text-decoration: line-through; font-size: 9px; width: 20px; }
.styles .av, .styles .aa { display: flex; align-items: center; gap: 3px; width: 23px; font-size: 10px; }
.styles .aa { font-size: 11px; }
.av span { border-bottom: 2px solid #3f78b5; line-height: 11px; }
.color { display: flex; align-items: center; justify-content: center; gap: 5px; }
.styles .color { width: 26px; margin-left: 3px; }
.color span { width: 13px; border-bottom: 3px solid #f00; font-size: 12px; font-weight: 600; line-height: 11px; text-align: center; }

.para { width: 119px; padding: 2px 0 0 4px; }
.drop { display: flex; align-items: center; gap: 3px; width: 25px; }
.sq { display: flex; justify-content: center; align-items: center; width: 17px; height: 17px; }
.para .drop svg:not(.caret) { width: 14px; }
.aligns svg:not(.caret) { width: 12px; height: 12px; }
.aligns .drop svg:not(.caret) { width: 12px; }
.para .div { margin: 0 3px; }
.on { background: #fbcdb5; }

.gallery { display: flex; width: 113px; height: 51px; margin: 1px 2px 0 3px; border: 1px solid #b5b5b5; background: #fff; }
.shapes { display: grid; grid-template-columns: repeat(6, 1fr); flex: 1; place-items: center; }
.spin { display: grid; grid-template-rows: repeat(3, 1fr); width: 12px; border-left: 1px solid #b5b5b5; }
.spin button { display: grid; place-items: center; border-bottom: 1px solid #b5b5b5; }
.spin button:last-child { border-bottom: 0; }
.dim .caret, .prev .caret { opacity: .5; }
.more .caret { border-top: 1px solid #666; height: 5px; padding-top: 1px; }
.arrange { position: relative; }
.open { background: #fbcbb4; height: 57px; width: 38px; margin-top: -1px; }
.quick { width: 35px; }
.editing .body { padding-left: 3px; }
.abac { width: 14px; font-size: 8px; font-weight: 600; line-height: 8px; }
.abac em { color: #3f78b5; font-style: normal; padding-left: 4px; }
.collapse { position: absolute; right: 7px; bottom: 4px; }
.collapse svg { width: 8px; height: 5px; }

.menu { position: absolute; background: #fff; border: 1px solid #c6c6c6; box-shadow: 1px 1px 2px #0003; color: #666; padding: 1px; }
.main-menu { left: -1px; top: 55px; width: 114px; }
.sub-menu { left: 111px; top: -2px; width: 142px; }
.menu button { display: flex; align-items: center; width: 100%; height: 20px; padding-left: 3px; text-align: left; }
.menu button span { flex: 1; }
.menu button svg { width: 13px; height: 13px; margin-right: 6px; }
.menu button:disabled { color: #b8b8b8; }
.menu h3 { background: #eee; font-weight: 700; line-height: 18px; padding-left: 4px; color: #666; }
.menu hr { height: 1px; margin: 0 0 1px 23px; border: 0; background: #e2e2e2; }
.align-item { position: relative; }
.menu .hot { background: #fde3da; }
.bar { fill: var(--bar, #fff); }
.gold { --bar: #efbf6d; }
.sub { margin-right: 8px; border: 3px solid transparent; border-left: 3px solid #555; border-right: 0; }
.callout { position: absolute; border: 4px solid #f8320a; pointer-events: none; }
.callout b { position: absolute; color: #f8320a; font: 700 28px/28px "Open Sans", sans-serif; }
.callout-1 { left: -2px; top: -2px; width: 117px; height: 25px; }
.callout-1 b { left: -35px; top: -4px; }
.callout-2 { left: -4px; top: -2px; width: 34px; height: 29px; border-width: 3px; }
.callout-2 b { left: 7px; top: 29px; }

.qat { display: grid; grid-template-columns: 32px 29px 28px 28px 16px 31px 32px 10px 20px 20px 8px 20px 20px 20px 24px 25px 8px 20px 28px 16px; align-items: center; height: 21px; padding-left: 4px; flex: none; }
.qat button { display: flex; align-items: center; justify-content: center; gap: 3px; }
.qat-align { position: relative; z-index: 3; height: 21px; display: flex; align-items: center; }
.qat .combo { margin-left: 0; }

.work { flex: 1; min-height: 0; display: flex; background: linear-gradient(#e4e4e4, #bcbcbc); overflow: hidden; }
.thumbs { list-style: none; width: 104px; margin: 0; padding: 15px 0 0 10px; overflow: hidden; flex: none; }
.thumbs li { display: flex; align-items: flex-start; height: 54px; }
.thumbs span { width: 12px; font-size: 12px; }
.thumbs svg { width: 67px; height: 39px; border: 1px solid #aaa; }
.thumbs .current span { color: #d24726; }
.thumbs .current svg { border: 2px solid #ee6c4a; width: 68px; height: 41px; }
.scroll { display: flex; flex-direction: column; width: 14px; flex: none; }
.scroll button { display: grid; place-items: center; height: 13px; background: #fff; border: 1px solid #ccc; }
.scroll button svg { width: 6px; height: 4px; }
.thumb { flex: 1; background: #fff; border: 1px solid #aaa; margin-top: 1px; }
.thumb.dark { flex: 294; background: #a8a8a8; border: 0; margin: 0; }
.track { flex: 49; background: #fff; margin-bottom: 1px; }
.right { margin-bottom: 1px; }
.vside { width: 20px; padding: 24px 0 0 5px; margin-left: 1px; border-left: 1px solid #aaa; flex: none; }
.ruler { display: flex; justify-content: space-between; background: #fff; color: #555; }
.ruler span { display: grid; place-items: center; }
.ruler b { font: 9px/11px "Open Sans", sans-serif; }
.horizontal { width: 656px; height: 12px; margin: 2px 0 10px; }
.horizontal span { width: 0; justify-content: center; }
.dot::before { content: ""; width: 1px; height: 1px; background: #999; }
.horizontal .half::before { content: ""; width: 1px; height: 5px; background: #aaa; }
.vertical { flex-direction: column; width: 12px; height: 370px; }
.vertical span { height: 0; align-content: center; }
.vertical .half::before { content: ""; width: 5px; height: 1px; background: #aaa; }
.vertical b { transform: rotate(-90deg); }
.canvas { flex: 1; display: flex; flex-direction: column; align-items: center; min-width: 0; padding-left: 1px; }
.slide { width: 658px; aspect-ratio: 16 / 9; flex: none; background: #fff; border: 1px solid #b0b0b0; position: relative; }
.shape { position: absolute; left: 68px; top: 115px; width: 139px; height: 110px; background: #4f81bd; border: 1px solid #55779f; }
.shape i { position: absolute; width: 6px; height: 6px; background: #fff; border: 1px solid #aaa; }
.shape .rot { position: absolute; left: 60px; top: -21px; width: 16px; height: 18px; }
.shape .nw, .shape .w, .shape .sw { left: -4px; }
.shape .n, .shape .s { left: 65px; }
.shape .ne, .shape .e, .shape .se { right: -4px; }
.shape .nw, .shape .n, .shape .ne { top: -4px; }
.shape .w, .shape .e { top: 51px; }
.shape .sw, .shape .s, .shape .se { bottom: -4px; }
```
